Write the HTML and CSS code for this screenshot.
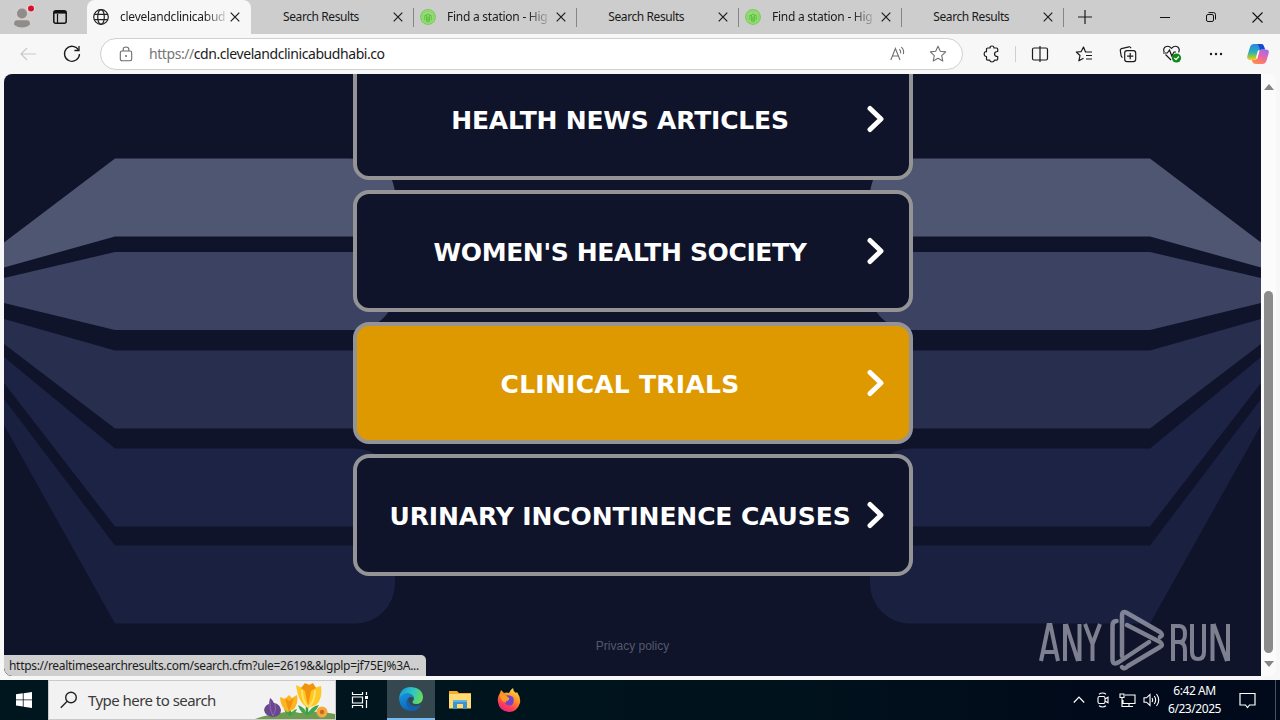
FILE: index.html
```html
<!DOCTYPE html>
<html lang="en">
<head>
<meta charset="utf-8">
<title>cdn.clevelandclinicabudhabi.co</title>
<link rel="stylesheet" href="styles.css">
</head>
<body>
<svg class="defs" width="0" height="0" aria-hidden="true">
  <defs>
    <symbol id="x" viewBox="0 0 10 10"><path d="M.7.7l8.6 8.6M9.3.7L.7 9.3" fill="none" stroke="#1b1b1b" stroke-width="1.2"/></symbol>
    <symbol id="station" viewBox="0 0 16 16"><circle cx="8" cy="8" r="7.3" fill="#a5dc8c" stroke="#76d152" stroke-width="1.3"/><circle cx="8" cy="8" r="5.400" fill="none" stroke="#7ed35c" stroke-width="1"/><path d="M4.800 11V7Q5.300 5.500 6.600 6.500V12.500M11.200 11V7Q10.700 5.500 9.400 6.500V12.500M6.600 6.500Q8 3 9.400 6.500M8 7.500V13" fill="none" stroke="#58c234" stroke-width="1.100"/></symbol>
    <symbol id="chev" viewBox="0 0 18 28"><path d="M3 3.500L14 14L3 24.500" fill="none" stroke="#fff" stroke-width="5" stroke-linecap="round" stroke-linejoin="round"/></symbol>
  </defs>
</svg>
<div class="screen">
  <header class="tabstrip">
    <div class="profile"><svg width="26" height="26" viewBox="0 0 26 26"><circle cx="13" cy="13" r="11.500" fill="#d0cecc"/><circle cx="13" cy="9.500" r="5" fill="#8f8c89"/><path d="M5 20.500Q5 16.300 8 16.300H18Q21 16.300 21 20.500Q18 23.500 13 23.500T5 20.500Z" fill="#8f8c89"/><circle cx="22" cy="4.500" r="3.800" fill="#f4d9da"/><circle cx="22" cy="4.500" r="3" fill="#d3122b"/></svg></div>
    <div class="tabmenu"><svg width="14" height="14" viewBox="0 0 14 14"><rect x=".8" y=".8" width="12.400" height="12.400" rx="2" fill="none" stroke="#111" stroke-width="1.500"/><path d="M1 2.300H13" stroke="#111" stroke-width="2.600"/><path d="M4.500 4V13" stroke="#111" stroke-width="1.200"/></svg></div>
    <nav class="tabs">
      <div class="tab active"><svg class="fav" width="16" height="16" viewBox="0 0 16 16" fill="none" stroke="#222" stroke-width="1.200"><circle cx="8" cy="8" r="7.300"/><ellipse cx="8" cy="8" rx="3.300" ry="7.300"/><path d="M1.300 5.300H14.700M1.300 10.700H14.700"/></svg><span class="title fade">clevelandclinicabud</span><svg class="close"><use href="#x"/></svg></div>
      <div class="tab plain"><span class="title">Search Results</span><svg class="close"><use href="#x"/></svg></div>
      <div class="tab"><svg class="fav" width="16" height="16"><use href="#station"/></svg><span class="title fade">Find a station - Hig</span><svg class="close"><use href="#x"/></svg></div>
      <div class="tab plain"><span class="title">Search Results</span><svg class="close"><use href="#x"/></svg></div>
      <div class="tab"><svg class="fav" width="16" height="16"><use href="#station"/></svg><span class="title fade">Find a station - Hig</span><svg class="close"><use href="#x"/></svg></div>
      <div class="tab plain"><span class="title">Search Results</span><svg class="close"><use href="#x"/></svg></div>
    </nav>
    <svg class="newtab" width="14" height="14" viewBox="0 0 14 14"><path d="M7 0V14M0 7H14" stroke="#1b1b1b" stroke-width="1.200"/></svg>
    <div class="winctl">
      <svg width="10" height="10"><path d="M0 5.500H10" stroke="#111"/></svg>
      <svg width="10" height="10" viewBox="0 0 10 10" fill="none" stroke="#111"><rect x=".5" y="2.500" width="7" height="7" rx="1.500"/><path d="M2.500 .6H7.500Q9.500 .6 9.500 2.500V7.500"/></svg>
      <svg width="11" height="11" viewBox="0 0 11 11"><path d="M.5.5L10.500 10.500M10.500.5L.5 10.500" stroke="#111" stroke-width="1.100"/></svg>
    </div>
  </header>
  <div class="toolbar">
    <div class="nav"><svg width="16" height="14" viewBox="0 0 16 14" fill="none" stroke="#c9c9c9" stroke-width="1.200"><path d="M16 7H1M7 1L1 7L7 13"/></svg></div>
    <div class="nav"><svg width="18" height="18" viewBox="0 0 18 18" fill="none" stroke="#1b1b1b" stroke-width="1.300"><path d="M15.600 5.200A7.500 7.500 0 1 0 16.500 9"/><path d="M16 1V5.500H11.400"/></svg></div>
    <div class="address">
      <svg class="lock" width="14" height="16" viewBox="0 0 14 16" fill="none" stroke="#6b6b6b" stroke-width="1.100"><rect x="1.300" y="5" width="11.400" height="9.800" rx="1.700"/><path d="M4.200 5V3.300Q4.200 1 7 1T9.800 3.300V5"/><circle cx="7" cy="10" r="1" fill="#6b6b6b" stroke="none"/></svg>
      <span class="url"><i>https://</i>cdn.clevelandclinicabudhabi.co</span>
      <svg class="aloud" width="16" height="16" viewBox="0 0 16 16" fill="none" stroke="#707070" stroke-width="1.100"><path d="M.8 14L5.400 2.500L10 14M2.400 10H8.400M9.300 3.200Q11.200 5 10.600 7.400M11.300 1.200Q14.400 4 13.400 8.200"/></svg>
      <svg class="star" width="18" height="18" viewBox="0 0 18 18" fill="none" stroke="#707070" stroke-width="1.100" stroke-linejoin="round"><path d="M9 1.300L11.300 6.300L16.700 6.900L12.700 10.600L13.800 16L9 13.300L4.200 16L5.300 10.600L1.300 6.900L6.700 6.300Z"/></svg>
    </div>
    <div class="tools">
      <div class="tool ext"><svg width="18" height="18" viewBox="0 0 18 18" fill="none" stroke="#1b1b1b" stroke-width="1.200" stroke-linejoin="round"><path d="M3.500 4.200Q3.500 3 4.700 3H7Q7 1 9 1T11 3H13.500Q14.700 3 14.700 4.200V6.500Q11.500 6.500 11.500 9T14.700 11.500V14Q14.700 15.200 13.500 15.200H11.500Q11 17 9 17T6.700 15.200H4.700Q3.500 15.200 3.500 14V11.500Q1.200 11.500 1.200 9T3.500 6.700Z"/></svg></div>
      <i class="rule"></i>
      <div class="tool"><svg width="18" height="18" viewBox="0 0 18 18" fill="none" stroke="#1b1b1b" stroke-width="1.200"><path d="M6.500 3H3Q1.500 3 1.500 4.500V13.500Q1.500 15 3 15H9M9 3H15Q16.500 3 16.500 4.500V13.500Q16.500 15 15 15H9M9 1V17M6.500 3H9"/></svg></div>
      <div class="tool"><svg width="18" height="18" viewBox="0 0 18 18" fill="none" stroke="#1b1b1b" stroke-width="1.200" stroke-linejoin="round"><path d="M17 7H10.500L8.500 2L6.200 6.600L1.300 7L5 10.500L3.900 15.800L8.500 13.300M11 10.500H17M11 14H17"/></svg></div>
      <div class="tool"><svg width="18" height="18" viewBox="0 0 18 18" fill="none" stroke="#1b1b1b" stroke-width="1.200"><path d="M3.600 12.500Q2.400 12 2.100 10.600L1.300 5.500Q1 4 2.500 3.600L10 1.800Q11.400 1.500 12 3.200"/><rect x="5.700" y="5.600" width="11" height="11" rx="2.300"/><path d="M11.200 8V14.200M8.100 11.100H14.300"/></svg></div>
      <div class="tool"><svg width="20" height="20" viewBox="0 0 20 20" fill="none" stroke="#1b1b1b" stroke-width="1.200"><path d="M2.200 8Q.8 4.800 3.200 3Q6.500 1 9.500 4.300Q12.500 1 15.800 3Q18.200 5 16.600 8.500M3.500 10.500L9 16M1 9H5.300L7.500 6L9.800 12L12 8H14"/><circle cx="14.500" cy="14" r="4.600" fill="#108718" stroke="none"/><path d="M12.300 14L14 15.600L16.800 12.500" stroke="#fff"/></svg></div>
      <div class="tool"><svg width="14" height="4" viewBox="0 0 14 4" fill="#1b1b1b"><circle cx="2" cy="2" r="1.200"/><circle cx="7" cy="2" r="1.200"/><circle cx="12" cy="2" r="1.200"/></svg></div>
      <div class="tool copilot"><svg width="22" height="20" viewBox="0 0 22 20"><defs><linearGradient id="ca" x1="0" y1="0" x2="0" y2="1"><stop offset="0" stop-color="#2f86e0"/><stop offset=".5" stop-color="#27afc0"/><stop offset=".8" stop-color="#9bcb35"/><stop offset="1" stop-color="#ffc928"/></linearGradient><linearGradient id="cb" x1=".7" y1="0" x2=".2" y2="1"><stop offset="0" stop-color="#a36bf0"/><stop offset=".5" stop-color="#f3659b"/><stop offset="1" stop-color="#ff9340"/></linearGradient></defs><path d="M7 0H14Q16.300 0 17 2.400L18 5.500H14.500Q12.700 5.500 12 7.600L10 14Q9.200 16 7 16H3.500Q-.5 16 .3 12L3 3Q4 0 7 0Z" fill="url(#ca)"/><path d="M10 0H14Q16.300 0 17 2.400L18 5.500H14.500L13 6.300Q12 .8 10 0Z" fill="#1848cf"/><path d="M14.500 5.500H18.500Q22.500 5.500 21.700 9L19.500 16.500Q18.300 20 15.500 20H9Q6 20 5.300 17.500L4.800 16H7.500Q9.600 16 10.300 13.800L12 7.600Q12.700 5.500 14.500 5.500Z" fill="url(#cb)"/><path d="M11.800 6.500L9.500 14.500" stroke="#f7f7f7" stroke-width="1.600"/></svg></div>
    </div>
  </div>
  <div class="viewport">
    <main class="page">
      <svg class="blades" viewBox="4 74 1257 602" width="1257" height="602">
        <g id="wing">
          <path fill="#4f5672" d="M4 242.500L115 158.500H350Q385 160 392 180Q395 188 395.500 198.500V236.500H115L4 267.500Z"/>
          <path fill="#3c4261" d="M4 278L115 252H395V300Q385 325 360 330H115L4 303Z"/>
          <path fill="#282e4e" d="M4 319L115 350.500H395V428.500H115L4 344Z"/>
          <path fill="#1c2344" d="M4 357L115 448.500H355A40 40 0 0 1 395 488V526.500H115L4 383Z"/>
          <path fill="#1a2140" d="M4 399L115 545.500H395V583.500A40 40 0 0 1 355 623.500H115L4 425Z"/>
        </g>
        <use href="#wing" transform="translate(1265 0) scale(-1 1)"/>
      </svg>
      <div class="cards">
        <a class="card"><span class="c1">HEALTH NEWS ARTICLES</span><svg><use href="#chev"/></svg></a>
        <a class="card"><span class="c2">WOMEN'S HEALTH SOCIETY</span><svg><use href="#chev"/></svg></a>
        <a class="card hover"><span class="c3">CLINICAL TRIALS</span><svg><use href="#chev"/></svg></a>
        <a class="card"><span class="c4">URINARY INCONTINENCE CAUSES</span><svg><use href="#chev"/></svg></a>
      </div>
      <a class="privacy">Privacy policy</a>
      <svg class="watermark" viewBox="0 0 200 64" width="200" height="64">
        <g fill="none" stroke="#a9abb8" stroke-opacity=".72">
          <g stroke-width="4">
            <path d="M5 52L12.500 16H14.500L22 52M7.500 43H19.500"/>
            <path d="M29 52V15M30 15L42 52M43.500 52V15"/>
            <path d="M49 15L56.500 35V52M64 15L56.500 35"/>
            <path d="M137 52V17H143.500Q149 17 149 25T143.500 33H137M143.500 33Q149 34 149 41V52"/>
            <path d="M156 15V43Q156 50 162 50T168 43V15"/>
            <path d="M176.500 52V15M177.500 15L191 52M192 52V15"/>
          </g>
          <path stroke-width="4.500" stroke-linecap="round" stroke-linejoin="round" d="M80.500 12Q76.500 12 76.500 17V50Q76.500 57 83 53L113 33M86 47V7Q86 1 91 4L124 23Q128 26 124 28M91 16L124 33Q128 36 124 38L92 57Q88 61 86 58"/>
        </g>
      </svg>
      <div class="status">https://realtimesearchresults.com/search.cfm?ule=2619&amp;&amp;lgplp=jf75EJ%3A...</div>
    </main>
    <div class="scroll"><i class="up"></i><i class="thumb"></i><i class="down"></i></div>
  </div>
  <footer class="taskbar">
    <div class="start"><svg width="16" height="16" viewBox="0 0 16 16" fill="#fff"><path d="M0 2.300L6.800 1.300V7.500H0ZM7.600 1.200L16 0V7.500H7.600ZM0 8.300H6.800V14.600L0 13.600ZM7.600 8.300H16V16L7.600 14.800Z"/></svg></div>
    <div class="search">
      <svg class="glass" width="18" height="18" viewBox="0 0 18 18" fill="none" stroke="#222" stroke-width="1.400"><circle cx="11" cy="6.500" r="5.300"/><path d="M7.200 10.300L.8 16.700"/></svg>
      <span>Type here to search</span>
      <svg class="flowers" width="80" height="38" viewBox="0 0 80 38">
        <path d="M0 38Q10 34 22 33Q34 29 45 32Q62 29 80 33V38Z" fill="#6d9c50"/>
        <path d="M35 35Q35 28 33 24M52 34V22" stroke="#3c9b45" stroke-width="2.500" fill="none"/>
        <path d="M52 34Q50 26 43 24Q45 32 52 34Q60 33 64 24Q56 25 52 34M35 35Q30 33 29 27Q34 29 35 35Q41 32 42 28Q37 29 35 35" fill="#43a64b"/>
        <path d="M15 17Q18 19 19 22Q25 23 26 29Q26 35 18 36Q10 35 9 29Q10 24 14 23Z" fill="#68478f"/><path d="M15 20Q14 28 18 35M20 23Q22 29 18 35" fill="none" stroke="#8e69b4"/>
        <path d="M25 16L30 18L34 14L37 17L42 14Q44 23 38 29L32 31Q25 25 25 16Z" fill="#ffb51f"/><path d="M30 17L34 31L39 17L34 20Z" fill="#f39211"/>
        <path d="M41 4L47 7L53 3L59 7L66 5Q68 18 61 24L53 27Q43 22 41 4Z" fill="#ffc722"/><path d="M46 7L50 2L54 4L58 2L61 7L56 10L53 25L50 10Z" fill="#f2930d"/><path d="M47 9Q47 20 53 26M60 9Q60 20 54 26" fill="none" stroke="#ffe16c" stroke-width="2"/>
        <circle cx="67" cy="31" r="5.500" fill="#f5a742"/><circle cx="67" cy="31" r="2.200" fill="#c76a1b"/>
      </svg>
    </div>
    <div class="app view"><svg width="18" height="18" viewBox="0 0 18 18" fill="none" stroke="#fff" stroke-width="1.200"><path d="M1.500 1V3.500H11.500V1M1.500 17V14.500H11.500V17M1.500 6H11.500V12H1.500ZM15.500 1V4M15.500 9V17"/><path d="M14 5H17V8H14Z" fill="#fff" stroke="none"/></svg></div>
    <div class="app edge"><svg width="24" height="24" viewBox="0 0 24 24"><defs><linearGradient id="e1" x1="0" y1=".3" x2="1" y2=".6"><stop offset="0" stop-color="#159ad9"/><stop offset=".5" stop-color="#2dc5c5"/><stop offset="1" stop-color="#69dc55"/></linearGradient><linearGradient id="e2" x1="0" y1="0" x2=".6" y2="1"><stop offset="0" stop-color="#1794dc"/><stop offset="1" stop-color="#0b62b8"/></linearGradient></defs><path d="M0 12Q1 0 12 0Q24 1 24 11Q23 17 17 17Q13 17 13.500 14.500Q16 12 14 9Q8 3 0 12Z" fill="url(#e1)"/><path d="M0 12Q3 6 9 6.500Q14 7 15 11Q10 8 8.500 13Q7.500 20 16 20.500Q19 20.500 22 18Q19 24 12 24Q1 23 0 12Z" fill="url(#e2)"/><path d="M9 11.500Q5.500 16 9 20Q11 23 15 23Q20 22 22 18Q10 22 9 11.500Z" fill="#1260aa"/></svg></div>
    <div class="app"><svg width="22" height="20" viewBox="0 0 22 20"><path d="M0 1H8L10 3H22V18H0Z" fill="#f2ad2b"/><path d="M0 4H22V18.500H0Z" fill="#ffdb72"/><path d="M4 10H18V19H14V14H8V19H4Z" fill="#3c93cf"/><path d="M4 10H18V12H4Z" fill="#65b3e2"/></svg></div>
    <div class="app"><svg width="24" height="24" viewBox="0 0 24 24"><defs><linearGradient id="f1" x1=".8" y1="0" x2=".3" y2="1"><stop offset="0" stop-color="#ffe14c"/><stop offset=".45" stop-color="#ff8a25"/><stop offset=".75" stop-color="#ff3f52"/><stop offset="1" stop-color="#e72288"/></linearGradient></defs><path d="M3 5L4 2L7 5Q10 4 12 5Q13 2 16 0Q16 3 19 5L20 4Q24 10 23 15Q20 24 12 24Q2 23 1 14Q0 9 3 5Z" fill="url(#f1)"/><path d="M8 8Q12 6 16 9Q18 14 15 17Q10 19 7 14L11 13Q13 11 9 10Z" fill="#7541cf"/><path d="M3 6Q8 6 12 10Q13 12 10 12.500Q8 13 9 15Q3 13 3 6Z" fill="#ff9a24"/></svg></div>
    <div class="tray">
      <svg width="12" height="8" viewBox="0 0 12 8" fill="none" stroke="#fff" stroke-width="1.200"><path d="M.8 6.500L6 1.200L11.200 6.500"/></svg>
      <svg width="14" height="16" viewBox="0 0 14 16" fill="none" stroke="#fff" stroke-width="1.100"><rect x="2" y="4.500" width="7" height="7" rx="1.500"/><path d="M9 7L12 5.200V10.800L9 9M3 2.200Q6.500-.2 10 2.200M3 13.800Q6.500 16.200 10 13.800"/></svg>
      <svg width="17" height="15" viewBox="0 0 17 15" fill="none" stroke="#fff" stroke-width="1.100"><path d="M6 2H16V10.500H4V7M10 10.500V13.500M6 13.500H14M1 1H5V4.500H1ZM3 4.500V13.500H6"/></svg>
      <svg width="17" height="14" viewBox="0 0 17 14" fill="none" stroke="#fff" stroke-width="1.100"><path d="M1 4.800H3.500L7 1.500V12.500L3.500 9.200H1ZM9 5Q10.300 7 9 9M11.300 3Q14 7 11.300 11M13.500 1Q18 7 13.500 13"/></svg>
    </div>
    <div class="clock"><span class="time">6:42 AM</span><span class="date">6/23/2025</span></div>
    <svg class="note" width="17" height="17" viewBox="0 0 17 17" fill="none" stroke="#fff" stroke-width="1.200"><path d="M1 1.500H16V13H10.500L8.500 15.500L6.500 13H1Z"/></svg>
    <i class="peek"></i>
  </footer>
</div>
</body>
</html>
```
FILE: styles.css
```css
* { box-sizing: border-box; }
body { margin: 0; font-family: "Noto Sans", "Open Sans", sans-serif; color: #1b1b1b; }
svg { display: block; flex: none; }
i { font-style: normal; }
.defs { position: absolute; }
.screen { width: 1280px; height: 720px; overflow: hidden; display: flex; flex-direction: column; background: #f7f7f7; }

.tabstrip { height: 34px; flex: none; background: #cdcdcd; display: flex; align-items: center; }
.profile { width: 44px; padding-left: 9px; }
.tabmenu { width: 43px; padding-left: 9px; }
.tabs { display: grid; grid-template-columns: 164px 163px repeat(4, 162.500px); height: 34px; }
.tab { display: flex; align-items: center; position: relative; padding: 0 11px 0 6px; font-size: 12px; letter-spacing: -.25px; white-space: nowrap; }
.tab:not(.active)::after { content: ""; position: absolute; right: 0; top: 8px; width: 1px; height: 19px; background: #858585; }
.tab.active { background: #f7f7f7; border-radius: 8px 8px 0 0; }
.tab .title { margin-left: 11px; line-height: 20px; }
.tab.active .title { margin-left: 11px; }
.tab .fade { -webkit-mask-image: linear-gradient(90deg, #000 80%, transparent 105%); mask-image: linear-gradient(90deg, #000 80%, transparent 105%); }
.tab.plain .title { flex: 1; margin: 0; text-align: center; padding-right: 8px; letter-spacing: -.42px; }
.tab .close { width: 10px; height: 10px; margin-left: auto; }
.newtab { margin-left: 14px; }
.winctl { margin-left: auto; display: grid; grid-template-columns: repeat(3, 46px); justify-items: center; align-items: center; }

.toolbar { height: 40px; flex: none; display: flex; align-items: center; padding-left: 6px; }
.nav { width: 44px; display: flex; justify-content: center; }
.address { width: 863px; height: 32px; margin-left: 6px; border: 1px solid #d0d0d0; border-radius: 16px; background: #fff; display: flex; align-items: center; padding: 0 15px 0 18px; }
.url { font-size: 14px; margin-left: 16px; letter-spacing: -.43px; line-height: 20px; }
.url i { color: #767676; }
.aloud { margin-left: auto; margin-right: 23px; }
.tools { display: flex; align-items: center; margin-left: 7px; }
.tool { width: 44px; display: flex; justify-content: center; }
.ext { margin-right: 1px; }
.rule { width: 1px; height: 16px; background: #cfcfcf; }
.ext + .rule + .tool { margin-left: 2px; }
.copilot { width: 40px; }

.viewport { height: 602px; flex: none; margin: 0 4px; display: flex; background: #fbfbfb; border-radius: 8px; overflow: hidden; }
.page { width: 1257px; position: relative; background: #0f142a; overflow: hidden; display: flex; flex-direction: column; align-items: center; }
.blades { position: absolute; left: 0; top: 0; }
.cards { position: relative; width: 560px; display: grid; gap: 10px; margin-top: -16px; flex: none; }
.card { height: 122px; border: 4px solid #949497; border-radius: 16px; background: #0f142a; display: flex; align-items: center; padding: 0 23px 0 17px; }
.card.hover { background: #de9900; }
.card span { flex: 1; text-align: center; white-space: nowrap; color: #fff; font: bold 25px/34px "DejaVu Sans", sans-serif; padding-top: 3px; }
.card .c1 { letter-spacing: -.19px; }
.card .c2 { letter-spacing: -.37px; }
.card .c3 { letter-spacing: .26px; }
.card .c4 { letter-spacing: -.12px; }
.card svg { width: 18px; height: 28px; margin-right: 1px; }
.privacy { position: relative; margin-top: 61px; color: #55586c; font: 12px/18px "Liberation Sans", sans-serif; }
.watermark { position: absolute; left: 1032px; top: 535px; }
.status { position: absolute; left: 0; bottom: 0; width: 422px; height: 21px; background: #cfcfcf; border-radius: 0 5px 0 8px; font-size: 12px; letter-spacing: -.3px; line-height: 21px; padding-left: 5px; white-space: nowrap; }
.scroll { width: 15px; display: flex; flex-direction: column; align-items: center; }
.up, .down { width: 0; border: 5px solid transparent; }
.up { border-bottom: 6px solid #858585; border-top: 0; margin-top: 10px; }
.thumb { width: 9px; height: 362px; margin-top: 201px; background: #8b8b8b; border-radius: 5px; }
.down { border-top: 6px solid #858585; border-bottom: 0; margin-top: 8px; }

.taskbar { height: 40px; flex: none; margin-top: 4px; background: linear-gradient(90deg, #00161f, #00131d 60%, #010a1a 85%); display: flex; align-items: center; color: #fff; }
.start { width: 48px; display: flex; justify-content: center; }
.search { width: 288px; height: 40px; border: 1px solid #c9c9c9; background: #f2f2f2; display: flex; align-items: center; padding-left: 11px; color: #3b3b3b; overflow: hidden; }
.search span { font-size: 15px; margin-left: 10px; letter-spacing: -.54px; white-space: nowrap; }
.flowers { margin-left: auto; }
.app { width: 48px; height: 40px; margin-right: 1px; display: flex; align-items: center; justify-content: center; }
.view { width: 50px; padding-right: 2px; }
.edge { background: #354850; border-bottom: 2px solid #76b9ed; }
.tray { margin-left: auto; display: grid; grid-template-columns: repeat(4, 24px); justify-items: center; align-items: center; }
.clock { width: 63px; text-align: center; font-size: 12px; line-height: 18px; letter-spacing: -.45px; display: flex; flex-direction: column; white-space: nowrap; }
.note { margin: 0 19px 0 13px; }
.peek { width: 1px; height: 40px; margin-right: 4px; background: #4a5260; }
```
